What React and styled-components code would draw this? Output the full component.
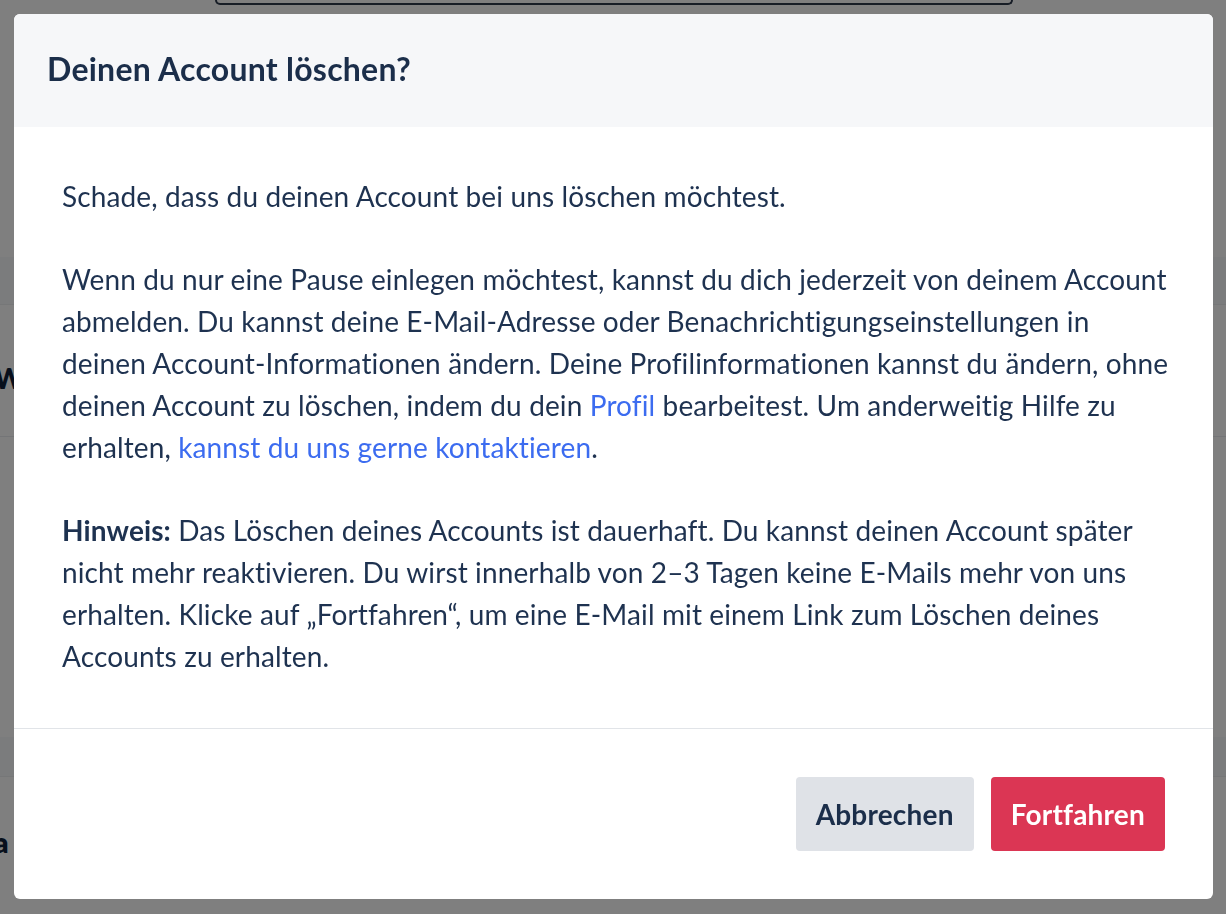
import React from "react";
import styled, { createGlobalStyle } from "styled-components";

const GlobalStyle = createGlobalStyle`
  html, body {
    margin: 0;
    padding: 0;
    background: #ffffff;
  }
  body {
    font-family: "Lato", "Open Sans", sans-serif;
    color: #1c2f4b;
    -webkit-font-smoothing: antialiased;
  }
`;

// page that sits behind the dimmed overlay
const Page = styled.div`
  height: 914px;
  overflow: hidden;
  display: flex;
  flex-direction: column;
`;

const TopField = styled.div`
  margin-left: 215px;
  width: 794px;
  height: 3px;
  border: 2px solid #2e3a4d;
  border-top: none;
  border-radius: 0 0 6px 6px;
`;

const Band = styled.div`
  margin-top: ${(p) => p.$top}px;
  height: ${(p) => p.$h}px;
  background: #f6f8fa;
  border-bottom: 1px solid #eceef1;
`;

const PageHeading = styled.h2`
  margin: ${(p) => p.$top}px 0 0 -6px;
  font-size: 28px;
  line-height: 30px;
  font-weight: 800;
  color: #0f1f38;
`;

const Divider = styled.div`
  margin-top: ${(p) => p.$top}px;
  height: 1px;
  background: #e8eaee;
`;

const Overlay = styled.div`
  position: fixed;
  inset: 0;
  background: rgba(0, 0, 0, 0.5);
  padding: 14px 13px 15px 14px;
  box-sizing: border-box;
  display: flex;
`;

const Modal = styled.div`
  flex: 1;
  background: #ffffff;
  border-radius: 6px;
  overflow: hidden;
  display: flex;
  flex-direction: column;
`;

const Header = styled.header`
  height: 114px;
  background: #f6f7f9;
  padding: 0 33px;
  display: flex;
  align-items: center;
`;

const Title = styled.h1`
  margin: 0 0 5px;
  font-size: 32px;
  font-weight: 700;
  color: #1b2e4a;
  letter-spacing: 0.25px;
`;

const Body = styled.div`
  padding: 48px 44px 51px 48px;
  border-bottom: 1px solid #e1e4e8;
`;

const Paragraph = styled.p`
  margin: 0 0 41px;
  font-size: 28px;
  line-height: 42px;
  color: #1e3250;
  letter-spacing: 0.12px;

  &:last-child {
    margin-bottom: 0;
  }

  strong {
    font-weight: 700;
  }
`;

const Link = styled.a`
  color: #3c6cf0;
  text-decoration: none;
`;

const Footer = styled.footer`
  flex: 1;
  padding: 48px 48px;
  display: flex;
  justify-content: flex-end;
  align-items: flex-start;
  gap: 17px;
`;

const Button = styled.button`
  height: 74px;
  padding: 0 20px;
  border: none;
  border-radius: 4px;
  font-family: inherit;
  font-size: 28px;
  font-weight: 700;
  letter-spacing: 0.2px;
  cursor: pointer;
  background: ${(p) => (p.$danger ? "#db3654" : "#dfe2e7")};
  color: ${(p) => (p.$danger ? "#ffffff" : "#1b2e4a")};
`;

export default function App() {
  return (
    <>
      <GlobalStyle />
      <Page>
        <TopField />
        <Band $top={252} $h={47} />
        <PageHeading $top={58}>Wa</PageHeading>
        <Divider $top={43} />
        <Band $top={300} $h={39} />
        <PageHeading $top={50}>a</PageHeading>
      </Page>
      <Overlay>
        <Modal role="dialog" aria-modal="true">
          <Header>
            <Title>Deinen Account löschen?</Title>
          </Header>
          <Body>
            <Paragraph>Schade, dass du deinen Account bei uns löschen möchtest.</Paragraph>
            <Paragraph>
              Wenn du nur eine Pause einlegen möchtest, kannst du dich jederzeit von deinem Account
              abmelden. Du kannst deine E-Mail-Adresse oder Benachrichtigungseinstellungen in
              deinen Account-Informationen ändern. Deine Profilinformationen kannst du ändern, ohne
              deinen Account zu löschen, indem du dein <Link href="#">Profil</Link> bearbeitest. Um
              anderweitig Hilfe zu erhalten,{" "}
              <Link href="#">kannst du uns gerne kontaktieren</Link>.
            </Paragraph>
            <Paragraph>
              <strong>Hinweis:</strong> Das Löschen deines Accounts ist dauerhaft. Du kannst deinen
              Account später nicht mehr reaktivieren. Du wirst innerhalb von 2–3 Tagen keine
              E-Mails mehr von uns erhalten. Klicke auf „Fortfahren“, um eine E-Mail mit einem Link
              zum Löschen deines Accounts zu erhalten.
            </Paragraph>
          </Body>
          <Footer>
            <Button>Abbrechen</Button>
            <Button $danger>Fortfahren</Button>
          </Footer>
        </Modal>
      </Overlay>
    </>
  );
}
